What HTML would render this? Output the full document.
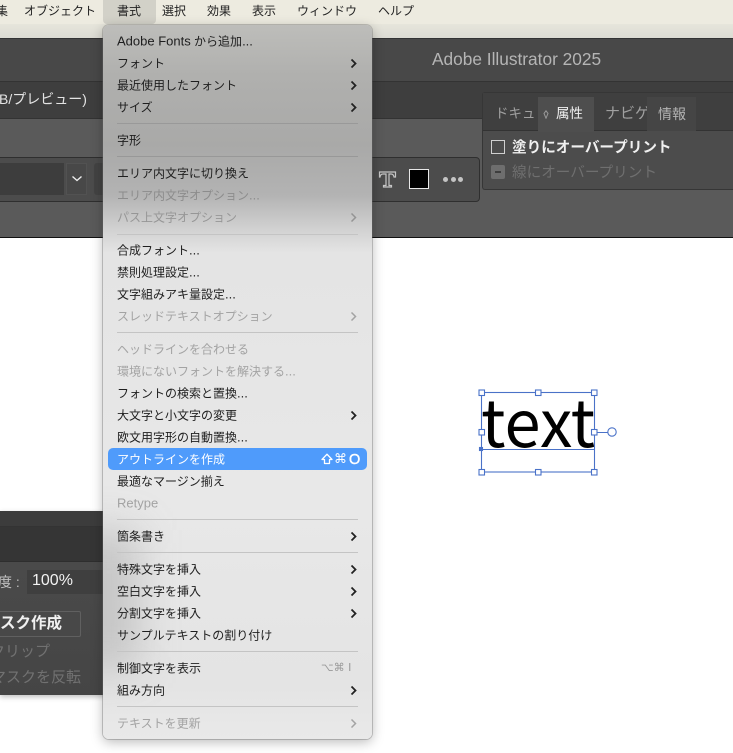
<!DOCTYPE html>
<html lang="ja"><head><meta charset="utf-8">
<style>
html,body{margin:0;padding:0;width:733px;height:753px;overflow:hidden;background:#fff}
body{font-family:"Liberation Sans","Noto Sans CJK JP",sans-serif}
#r{position:absolute;left:0;top:0;width:733px;height:753px;overflow:hidden;filter:blur(.35px)}
div,span,svg{position:absolute}
em{font-style:normal;font-size:13px}
span{white-space:nowrap;line-height:22px;height:22px}
.bar span{font-size:12px;color:#222;top:0}
.m span.t{left:117px;font-size:12px;color:#1e1e1e;transform:translateY(.6px)}
.m span.d{color:#a3a3a3}
.sep{left:117px;width:241px;height:1px;background:#c4c4c4}
.ch{left:350px;width:7px;height:11px}
</style></head><body><div id="r">
<!-- window chrome -->
<div style="left:0;top:0;width:733px;height:24px;background:#edebe0"></div>
<div style="left:0;top:24px;width:733px;height:14px;background:linear-gradient(#e6e5db,#dcdbd3)"></div>
<div style="left:0;top:38px;width:733px;height:43px;background:#484848;border-top:1px solid #333;box-sizing:border-box"></div>
<div style="left:0;top:81px;width:733px;height:37px;background:#3e3e3e;border-top:1px solid #333;box-sizing:border-box"></div>
<div style="left:0;top:118px;width:733px;height:119px;background:#5a5a5a;border-top:1px solid #333;box-sizing:border-box"></div>
<div style="left:0;top:237px;width:733px;height:1px;background:#111"></div>
<span style="left:-1px;top:88px;font-size:14px;color:#e4e4e4">B/プレビュー)</span>
<span style="left:432px;top:48px;font-size:17.300px;color:#b5b5b5">Adobe Illustrator 2025</span>

<!-- control bar -->
<div style="left:-5px;top:157px;width:485px;height:45px;background:#4c4c4c;border:1px solid #2f2f2f;border-radius:4px;box-sizing:border-box"></div>
<div style="left:0;top:163px;width:64px;height:32px;background:#3d3d3d"></div>
<div style="left:66px;top:163px;width:21px;height:32px;background:#484848;border:1px solid #525252;box-sizing:border-box"></div>
<svg style="left:71px;top:175px" width="12" height="8" viewBox="0 0 12 8"><path d="M1.500 1.500 6 5.500 10.500 1.500" fill="none" stroke="#eee" stroke-width="1.400"/></svg>
<div style="left:94px;top:163px;width:9px;height:32px;background:#434343;border-radius:3px 0 0 3px"></div>
<svg style="left:378px;top:170px" width="19" height="19" viewBox="0 0 19 19"><path d="M1.500 2h16v5h-1.500q-.5-3-3-3H11v11.500h2.500V17h-8v-1.500H8V4H5Q2.500 4 2 7H1.500z" fill="none" stroke="#c6c6c6" stroke-width="1.200"/></svg>
<div style="left:409px;top:169px;width:20px;height:20px;background:#000;border:1px solid #e8e8e8;box-sizing:border-box"></div>
<div style="left:443px;top:177px;width:5px;height:5px;border-radius:50%;background:#c4c4c4"></div>
<div style="left:451px;top:177px;width:5px;height:5px;border-radius:50%;background:#c4c4c4"></div>
<div style="left:458px;top:177px;width:5px;height:5px;border-radius:50%;background:#c4c4c4"></div>

<!-- right panel -->
<div style="left:482px;top:92px;width:251px;height:98px;background:#4c4c4c;border:1px solid #363636;border-right:0;border-radius:3px 0 0 3px;box-sizing:border-box"></div>
<div style="left:483px;top:93px;width:250px;height:38px;background:#3f3f3f;border-bottom:1px solid #333;box-sizing:border-box"></div>
<div style="left:538px;top:97px;width:56px;height:35px;background:#4e4e4e"></div>
<span style="left:495px;top:103px;font-size:13.500px;color:#a0a0a0">ドキュ</span>
<svg style="left:543px;top:110px" width="6" height="9" viewBox="0 0 6 9"><path d="M3 .8 5 3.500 3 8.200 1 3.500z" fill="none" stroke="#9a9a9a"/></svg>
<span style="left:556px;top:103px;font-size:13.500px;color:#f0f0f0">属性</span>
<span style="left:605px;top:103px;font-size:15px;color:#a0a0a0">ナビゲ</span>
<div style="left:647px;top:97px;width:49px;height:34px;background:#454545"></div>
<span style="left:658px;top:103px;font-size:14px;color:#b4b4b4">情報</span>
<div style="left:491px;top:140px;width:14px;height:14px;border:1px solid #d0d0d0;box-sizing:border-box"></div>
<span style="left:512px;top:137px;font-size:14.600px;font-weight:bold;color:#f0f0f0">塗りにオーバープリント</span>
<div style="left:491px;top:165px;width:14px;height:14px;background:#6e6e6e;border-radius:2px"></div>
<div style="left:495px;top:171px;width:6px;height:2px;background:#3e3e3e"></div>
<span style="left:512px;top:162px;font-size:14.600px;color:#6f6f6f">線にオーバープリント</span>

<!-- bottom-left panel -->
<div style="left:0;top:511px;width:110px;height:184px;background:linear-gradient(#4c4c4c,#454545);box-shadow:0 2px 5px rgba(0,0,0,.25)"></div>
<div style="left:0;top:511px;width:110px;height:16px;background:#3c3c3c;border-bottom:1px solid #333;box-sizing:border-box"></div>
<div style="left:0;top:527px;width:110px;height:34px;background:#353535"></div>
<div style="left:0;top:561px;width:110px;height:1px;background:#2e2e2e"></div>
<div style="left:27px;top:570px;width:83px;height:24px;background:#3f3f3f"></div>
<span style="left:-2px;top:571px;font-size:14px;color:#c0c0c0">度 :</span>
<span style="left:32px;top:570px;font-size:16px;color:#f2f2f2">100%</span>
<div style="left:-4px;top:611px;width:85px;height:26px;border:1px solid #606060;background:#484848;border-radius:2px;box-sizing:border-box"></div>
<span style="left:0;top:613px;font-size:15.500px;font-weight:bold;color:#f0f0f0">スク作成</span>
<span style="left:-10px;top:641px;font-size:15px;color:#717171">クリップ</span>
<span style="left:-9px;top:667px;font-size:15px;color:#717171">マスクを反転</span>

<!-- canvas object -->
<span style="left:481px;top:382px;height:74px;line-height:74px;font-size:65px;color:#000;font-family:'Noto Sans CJK JP',sans-serif">text</span>
<svg style="left:470px;top:382px" width="150" height="100" viewBox="470 382 150 100">
<g fill="none" stroke="#4a72c8" stroke-width="1.100">
<rect x="481.500" y="392.500" width="113" height="79.500"/>
<path d="M481 449.500H594M595 432.500H608"/>
<circle cx="612" cy="432" r="4.200" fill="#fff"/>
<g fill="#fff">
<rect x="479" y="390" width="5.500" height="5.500"/><rect x="535.500" y="390" width="5.500" height="5.500"/><rect x="591.500" y="390" width="5.500" height="5.500"/>
<rect x="479" y="429.500" width="5.500" height="5.500"/><rect x="591.500" y="429.500" width="5.500" height="5.500"/>
<rect x="479" y="469.500" width="5.500" height="5.500"/><rect x="535.500" y="469.500" width="5.500" height="5.500"/><rect x="591.500" y="469.500" width="5.500" height="5.500"/>
</g>
<rect x="479.500" y="447.500" width="3" height="3" fill="#4a72c8"/>
</g></svg>

<!-- menu bar text -->
<div class="bar" style="left:0;top:0;width:733px;height:24px">
<span style="left:-4px;top:0">集</span>
<span style="left:24px">オブジェクト</span>
<div style="left:103px;top:0;width:53px;height:24px;background:#d2d1c8;border-radius:0 0 4px 4px"></div>
<span style="left:117px">書式</span>
<span style="left:162px">選択</span>
<span style="left:207px">効果</span>
<span style="left:252px">表示</span>
<span style="left:297px">ウィンドウ</span>
<span style="left:378px">ヘルプ</span>
</div>

<!-- menu -->
<div class="m" style="left:103px;top:25px;width:269px;height:714px;border-radius:6px;box-shadow:0 3px 12px rgba(0,0,0,.28),0 0 0 1px rgba(120,120,120,.35);overflow:hidden;background:linear-gradient(#bdbdba 0,#b0b0ae 50px,#a9a9a8 120px,#b3b3b3 170px,#d2d2d2 205px,#e4e4e4 228px,#e8e8e8 480px,#e4e4e4 660px,#e9e9e9 714px)">
<div style="left:-35px;top:505px;width:70px;height:140px;background:rgba(130,130,130,.32);filter:blur(20px)"></div>
</div>
<div class="m" style="left:0;top:0;width:733px;height:753px">
<span class="t" style="top:30px"><em>Adobe Fonts</em> から追加<em>...</em></span>
<span class="t" style="top:52px">フォント</span>
<span class="t" style="top:74px">最近使用したフォント</span>
<span class="t" style="top:96px">サイズ</span>
<div class="sep" style="top:123px;background:#999"></div>
<span class="t" style="top:129px">字形</span>
<div class="sep" style="top:156px;background:#989898"></div>
<span class="t" style="top:162px">エリア内文字に切り換え</span>
<span class="t d" style="top:184px;color:#8c8c8c">エリア内文字オプション<em>...</em></span>
<span class="t d" style="top:206px;color:#969696">パス上文字オプション</span>
<div class="sep" style="top:234px"></div>
<span class="t" style="top:239px">合成フォント<em>...</em></span>
<span class="t" style="top:261px">禁則処理設定<em>...</em></span>
<span class="t" style="top:283px">文字組みアキ量設定<em>...</em></span>
<span class="t d" style="top:305px">スレッドテキストオプション</span>
<div class="sep" style="top:332px"></div>
<span class="t d" style="top:338px">ヘッドラインを合わせる</span>
<span class="t d" style="top:360px">環境にないフォントを解決する<em>...</em></span>
<span class="t" style="top:382px">フォントの検索と置換<em>...</em></span>
<span class="t" style="top:404px">大文字と小文字の変更</span>
<span class="t" style="top:426px">欧文用字形の自動置換<em>...</em></span>
<div style="left:108px;top:448px;width:259px;height:22px;background:#4f9bfb;border-radius:5px"></div>
<span class="t" style="top:448px;color:#fff">アウトラインを作成</span>
<svg style="left:321px;top:453px" width="12" height="12" viewBox="0 0 12 12"><path d="M6 1.200 11 6.500H8.500V10.500H3.500V6.500H1z" fill="none" stroke="#fff" stroke-width="1.300" stroke-linejoin="round"/></svg>
<span style="left:334px;top:449px;font-size:13px;color:#fff;font-family:'DejaVu Sans',sans-serif">⌘</span>
<span style="left:349px;top:449px;font-size:14.500px;color:#fff;-webkit-text-stroke:.4px #fff">O</span>
<span class="t" style="top:470px">最適なマージン揃え</span>
<span class="t d" style="top:492px"><em>Retype</em></span>
<div class="sep" style="top:519px"></div>
<span class="t" style="top:525px">箇条書き</span>
<div class="sep" style="top:552px"></div>
<span class="t" style="top:558px">特殊文字を挿入</span>
<span class="t" style="top:580px">空白文字を挿入</span>
<span class="t" style="top:602px">分割文字を挿入</span>
<span class="t" style="top:624px">サンプルテキストの割り付け</span>
<div class="sep" style="top:651px"></div>
<span class="t" style="top:657px">制御文字を表示</span>
<span style="left:321px;top:657px;font-size:11px;color:#9a9a9a;font-family:'DejaVu Sans',sans-serif">⌥⌘ I</span>
<span class="t" style="top:679px">組み方向</span>
<div class="sep" style="top:706px"></div>
<span class="t d" style="top:712px">テキストを更新</span>
<svg class="ch" style="top:58px" viewBox="0 0 7 11"><path d="M1.500 1.500 5.500 5.500 1.500 9.500" fill="none" stroke="#222" stroke-width="1.800"/></svg>
<svg class="ch" style="top:80px" viewBox="0 0 7 11"><path d="M1.500 1.500 5.500 5.500 1.500 9.500" fill="none" stroke="#222" stroke-width="1.800"/></svg>
<svg class="ch" style="top:102px" viewBox="0 0 7 11"><path d="M1.500 1.500 5.500 5.500 1.500 9.500" fill="none" stroke="#222" stroke-width="1.800"/></svg>
<svg class="ch" style="top:212px" viewBox="0 0 7 11"><path d="M1.500 1.500 5.500 5.500 1.500 9.500" fill="none" stroke="#949494" stroke-width="1.500"/></svg>
<svg class="ch" style="top:311px" viewBox="0 0 7 11"><path d="M1.500 1.500 5.500 5.500 1.500 9.500" fill="none" stroke="#a3a3a3" stroke-width="1.500"/></svg>
<svg class="ch" style="top:410px" viewBox="0 0 7 11"><path d="M1.500 1.500 5.500 5.500 1.500 9.500" fill="none" stroke="#222" stroke-width="1.800"/></svg>
<svg class="ch" style="top:531px" viewBox="0 0 7 11"><path d="M1.500 1.500 5.500 5.500 1.500 9.500" fill="none" stroke="#222" stroke-width="1.800"/></svg>
<svg class="ch" style="top:564px" viewBox="0 0 7 11"><path d="M1.500 1.500 5.500 5.500 1.500 9.500" fill="none" stroke="#222" stroke-width="1.800"/></svg>
<svg class="ch" style="top:586px" viewBox="0 0 7 11"><path d="M1.500 1.500 5.500 5.500 1.500 9.500" fill="none" stroke="#222" stroke-width="1.800"/></svg>
<svg class="ch" style="top:608px" viewBox="0 0 7 11"><path d="M1.500 1.500 5.500 5.500 1.500 9.500" fill="none" stroke="#222" stroke-width="1.800"/></svg>
<svg class="ch" style="top:685px" viewBox="0 0 7 11"><path d="M1.500 1.500 5.500 5.500 1.500 9.500" fill="none" stroke="#222" stroke-width="1.800"/></svg>
<svg class="ch" style="top:718px" viewBox="0 0 7 11"><path d="M1.500 1.500 5.500 5.500 1.500 9.500" fill="none" stroke="#a3a3a3" stroke-width="1.500"/></svg>
</div>
</div></body></html>
